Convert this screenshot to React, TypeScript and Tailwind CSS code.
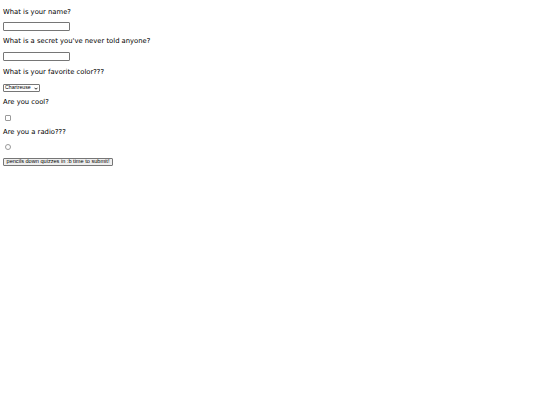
export default function App() {
  return (
    <div className="min-h-[405px] w-[540px] bg-white pl-[3px] pt-[7px] text-black [font-family:'DejaVu_Sans',sans-serif]">
      <form className="flex flex-col items-start">
        <label className="block text-[6.8px] leading-[10px]">What is your name?</label>
        <input type="text" className="mt-[5px] h-[9px] w-[67px] rounded-[1px] border border-[#767676] bg-white" />

        <label className="mt-[5px] block text-[6.8px] leading-[10px]">What is a secret you've never told anyone?</label>
        <input type="text" className="mt-[6px] h-[9px] w-[67px] rounded-[1px] border border-[#767676] bg-white" />

        <label className="mt-[6px] block text-[6.8px] leading-[10px]">What is your favorite color???</label>
        <div className="mt-[7px] flex h-[8px] w-[37px] items-center justify-between rounded-[1px] border border-[#767676] bg-white pl-[1px] pr-[1px] text-[5.2px] leading-none [font-family:'Liberation_Sans',sans-serif]">
          <span>Chartreuse</span>
          <svg width="4" height="3" viewBox="0 0 10 8" fill="none" stroke="black" strokeWidth="2.2">
            <path d="M1 2 L5 6 L9 2" />
          </svg>
        </div>

        <label className="mt-[5px] block text-[6.8px] leading-[10px]">Are you cool?</label>
        <div className="ml-[2px] mt-[8px] h-[6px] w-[6px] rounded-[1px] border border-[#9a9a9a] bg-white" />

        <label className="mt-[6px] block text-[6.8px] leading-[10px]">Are you a radio???</label>
        <div className="ml-[2px] mt-[7px] h-[6px] w-[6px] rounded-full border border-[#9a9a9a] bg-white" />

        <button type="button" className="mt-[8px] flex h-[8px] w-[110px] items-center justify-center rounded-[1px] border border-[#767676] bg-[#efefef] text-[5.6px] leading-none whitespace-nowrap [font-family:'Liberation_Sans',sans-serif]">
          pencils down quizzes in :b time to submit!
        </button>
      </form>
    </div>
  )
}
